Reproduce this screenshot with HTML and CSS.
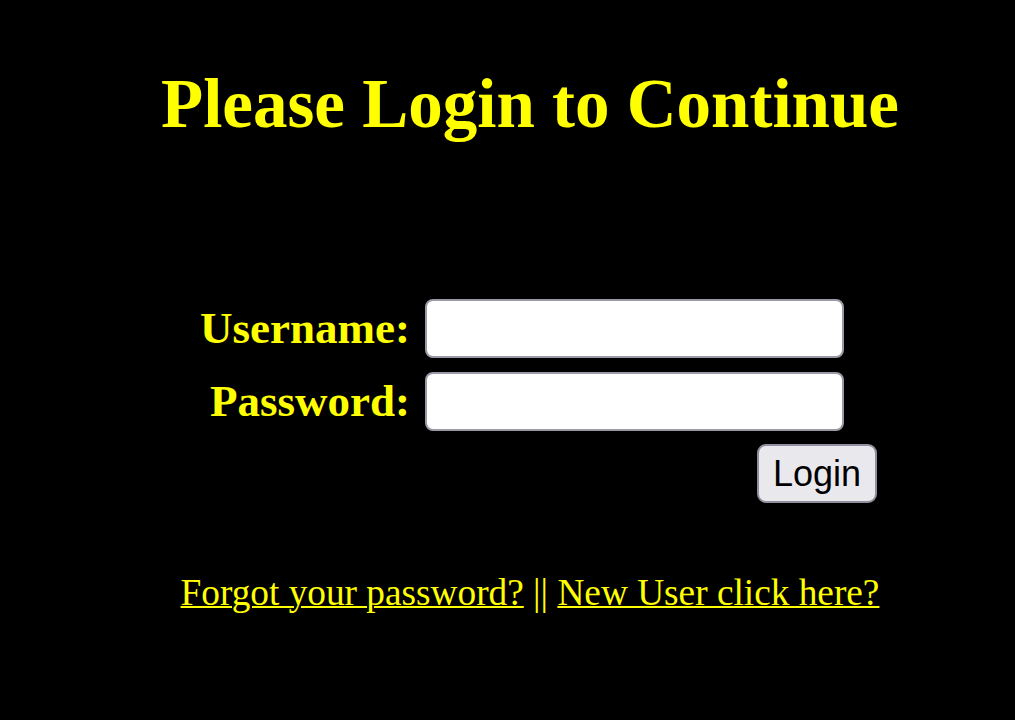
FILE: index.html
```html
<html lang="en"><head>
    <meta charset="UTF-8">
    <meta name="viewport" content="width=device-width, initial-scale=1.0">
    <title>Login</title>
    <link rel="stylesheet" href="styles.css">
  </head>
  <body>
    <!-- Page Container -->
    <div class="page">
      <h1>Please Login to Continue</h1>

      <!-- Login Form -->
      <form id="loginForm" class="login-form">
        <label for="username">Username:</label>
        <input type="text" id="username" name="username">
        <span></span>

        <label for="password">Password:</label>
        <input type="password" id="password" name="password">
        <span></span>

        <button type="submit">Login</button>
      </form>

      <!-- Help Links -->
      <p class="links">
        <a href="#">Forgot your password?</a> || <a href="#">New User click here?</a>
      </p>
    </div>
  </body></html>
```

FILE: styles.css
```css
/* General Styling */
body {
  margin: 0;
  padding: 0;
  background-color: #000;
  font-family: "Liberation Serif", "Times New Roman", serif;
  color: #ffff00;
}

/* Page Container Styling */
.page {
  padding-left: 45px;
  text-align: center;
}

.page h1 {
  margin: 70px 0 0;
  font-size: 69px;
  line-height: 1;
  font-weight: bold;
}

/* Login Form Styling */
.login-form {
  display: grid;
  grid-template-columns: 210px 419px 18px;
  column-gap: 15px;
  row-gap: 14px;
  width: 677px;
  margin: 160px auto 0;
  padding-left: 17px;
}

.login-form label {
  align-self: center;
  text-align: right;
  font-size: 45px;
  font-weight: bold;
  line-height: 1;
  white-space: nowrap;
}

.login-form input {
  height: 59px;
  box-sizing: border-box;
  border: 2px solid #9a9aa6;
  border-radius: 8px;
  background: #fff;
  font-size: 30px;
  padding: 0 10px;
}

/* Submit Button Styling */
.login-form button {
  grid-column: 2 / 4;
  justify-self: end;
  margin-top: -1px;
  width: 120px;
  height: 59px;
  box-sizing: border-box;
  padding: 0;
  font-family: "Liberation Sans", Arial, sans-serif;
  font-size: 36px;
  color: #000;
  background-color: #e9e9ed;
  border: 2px solid #8f8f9d;
  border-radius: 9px;
  cursor: pointer;
}

/* Links Styling */
.links {
  margin: 71px 0 0;
  font-size: 37.3px;
  line-height: 1;
}

.links a {
  color: #ffff00;
  text-decoration-thickness: 2px;
}
```
